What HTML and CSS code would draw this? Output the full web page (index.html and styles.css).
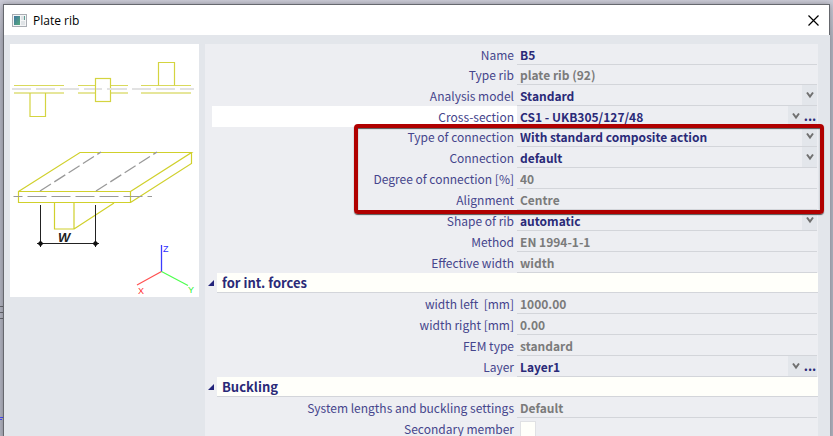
FILE: index.html
```
<!DOCTYPE html>
<html lang="en">
<head>
  <meta charset="UTF-8">
  <meta name="viewport" content="width=device-width, initial-scale=1.0">
  <title>Plate rib</title>
  <link rel="stylesheet" href="styles.css">
</head>
<body>
  <!-- bits of the drawing area visible behind the dialog -->
  <svg class="backdrop" width="4" height="130" viewBox="0 0 4 130" aria-hidden="true">
    <path d="M0 .5h4M0 6.5h4M0 12.5h4" stroke="#66676e"/>
    <path d="M0 111.5h4M0 113.5h2" stroke="#4a4aff"/>
  </svg>

  <div class="dialog">
    <header class="titlebar">
      <svg class="app-icon" width="15" height="13" viewBox="0 0 15 13" aria-hidden="true">
        <defs>
          <linearGradient id="pane" x1="0" y1="0" x2="1" y2="1">
            <stop offset="0" stop-color="#3f74a0"/>
            <stop offset="1" stop-color="#57ab7c"/>
          </linearGradient>
        </defs>
        <rect x=".5" y=".5" width="14" height="12" fill="#f4f5f6" stroke="#a9adb3"/>
        <rect x="2" y="2" width="6" height="9" fill="url(#pane)"/>
        <path d="M9 2h3v4H9zM9 7h4v4H9z" fill="#dfe3e6"/>
        <path d="M12.500 2v4" stroke="#5f9d93"/>
      </svg>
      <h1>Plate rib</h1>
      <button class="close" type="button" aria-label="Close">
        <svg width="11" height="11" viewBox="0 0 11 11"><path d="M.5 .5l10 10M10.500 .5l-10 10" stroke="#000" stroke-width="1.200"/></svg>
      </button>
    </header>

    <main class="content">
      <svg class="preview" width="189" height="253" viewBox="10 44 189 253" role="img" aria-label="Plate rib scheme">
        <!-- rib positions -->
        <g fill="none" stroke="#d9d95c">
          <path d="M14 85.500h50M78 85.500h50M141 85.500h50"/>
          <path d="M14 93h50M78 93h50M141 93h50" stroke="#e6e69a" stroke-width="2"/>
        </g>
        <path d="M12 89h182" stroke="#e2e2e2" stroke-width="2" stroke-dasharray="19 5"/>
        <g fill="#fff" stroke="#d4d440" stroke-width="1.200">
          <path d="M30 93v23.500h15.500V93" fill="none"/>
          <rect x="95.500" y="78.500" width="15" height="23"/>
          <path d="M158.500 85.500v-23h16v23" fill="none"/>
        </g>
        <path d="M107 89h4M96 89h6" stroke="#e2e2e2" stroke-width="2"/>
        <!-- plate with rib -->
        <g fill="none" stroke="#d0d02c" stroke-width="1.200">
          <path d="M18.500 191.500h112v11h-112zM18.500 191.500L80 152.500h111.500l-61 39M191.500 152.500v11l-61 39"/>
          <path d="M54.500 202.500v26.500h19.500v-26.500M74 229l40-26"/>
        </g>
        <g fill="none" stroke="#999">
          <path d="M40 191l61-39M96 191l61-39" stroke-width="1.300" stroke-dasharray="13 4"/>
          <path d="M13.500 196.500H152" stroke-dasharray="19 5" stroke-dashoffset="10"/>
        </g>
        <!-- width dimension -->
        <path d="M40.500 205v42M95.500 205v42M37 243.500h62" stroke="#222"/>
        <path d="M37.500 243.500l3-3 3 3-3 3zM92.500 243.500l3-3 3 3-3 3z" fill="#111"/>
        <text class="dim" x="58" y="242">W</text>
        <!-- axes -->
        <path d="M161.500 272v-27" stroke="#3c3cff" stroke-width="1.300"/>
        <path d="M161.500 271.500L137 285" stroke="#ff5050" stroke-width="1.200"/>
        <path d="M161.500 271.500L188 285.500" stroke="#4dff4d" stroke-width="1.200"/>
        <text class="axis axis-z" x="163" y="252">Z</text>
        <text class="axis axis-x" x="138" y="294">X</text>
        <text class="axis axis-y" x="188" y="293">Y</text>
      </svg>

      <form class="props">
        <div class="row row-short">
          <label for="name">Name</label>
          <div class="value"><input id="name" type="text" value="B5"></div>
        </div>
        <div class="row">
          <label for="type-rib">Type rib</label>
          <div class="value"><input id="type-rib" type="text" value="plate rib (92)" readonly></div>
        </div>
        <div class="row">
          <label for="model">Analysis model</label>
          <div class="value"><select id="model"><option>Standard</option></select></div>
        </div>
        <div class="row row-short selected">
          <label for="section">Cross-section</label>
          <div class="value"><select id="section"><option>CS1 - UKB305/127/48</option></select><button class="more" type="button" aria-label="Edit cross-section">...</button></div>
        </div>

        <div class="highlight">
          <div class="row">
            <label for="conn-type">Type of connection</label>
            <div class="value"><select id="conn-type"><option>With standard composite action</option></select></div>
          </div>
          <div class="row">
            <label for="conn">Connection</label>
            <div class="value"><select id="conn"><option>default</option></select></div>
          </div>
          <div class="row">
            <label for="degree">Degree of connection [%]</label>
            <div class="value"><input id="degree" type="text" value="40" readonly></div>
          </div>
          <div class="row">
            <label for="align">Alignment</label>
            <div class="value"><input id="align" type="text" value="Centre" readonly></div>
          </div>
        </div>

        <div class="row">
          <label for="shape">Shape of rib</label>
          <div class="value"><select id="shape"><option>automatic</option></select></div>
        </div>
        <div class="row">
          <label for="method">Method</label>
          <div class="value"><input id="method" type="text" value="EN 1994-1-1" readonly></div>
        </div>
        <div class="row">
          <label for="eff-width">Effective width</label>
          <div class="value"><input id="eff-width" type="text" value="width" readonly></div>
        </div>

        <div class="group">
          <svg class="expander" width="6" height="6" viewBox="0 0 6 6" aria-hidden="true"><path d="M6 0v6H0z" fill="#23237a"/></svg>
          <h2>for int. forces</h2>
        </div>
        <div class="row">
          <label for="width-left">width left&nbsp; [mm]</label>
          <div class="value"><input id="width-left" type="text" value="1000.00" readonly></div>
        </div>
        <div class="row">
          <label for="width-right">width right [mm]</label>
          <div class="value"><input id="width-right" type="text" value="0.00" readonly></div>
        </div>
        <div class="row">
          <label for="fem">FEM type</label>
          <div class="value"><input id="fem" type="text" value="standard" readonly></div>
        </div>
        <div class="row">
          <label for="layer">Layer</label>
          <div class="value"><select id="layer"><option>Layer1</option></select><button class="more" type="button" aria-label="Edit layer">...</button></div>
        </div>

        <div class="group">
          <svg class="expander" width="6" height="6" viewBox="0 0 6 6" aria-hidden="true"><path d="M6 0v6H0z" fill="#23237a"/></svg>
          <h2>Buckling</h2>
        </div>
        <div class="row">
          <label for="buckling">System lengths and buckling settings</label>
          <div class="value"><input id="buckling" type="text" value="Default" readonly></div>
        </div>
        <div class="row">
          <label for="secondary">Secondary member</label>
          <div class="value"><input id="secondary" type="checkbox"></div>
        </div>
      </form>
    </main>
  </div>
</body>
</html>
```
FILE: styles.css
```
* {
  box-sizing: border-box;
}
body {
  margin: 0;
  height: 100vh;
  overflow: hidden;
  padding: 4px 3px 0;
  background: linear-gradient(#ccccd8, #b2b4c0 40px);
  font-family: "Noto Sans CJK SC", "Open Sans", sans-serif;
  font-size: 12px;
  color: #45458c;
}
.backdrop {
  position: absolute;
  left: 0;
  top: 306px;
}
.dialog {
  position: relative;
  min-height: 100%;
  background: #e3e6eb;
  border-top: 1px solid #66686e;
  border-left: 1px solid #66686e;
  box-shadow: 0 0 6px rgba(0, 0, 0, 0.3);
}
/* title bar */
.titlebar {
  display: flex;
  align-items: center;
  height: 30px;
  padding: 0 10px 0 8px;
  background: #fff;
  border-right: 1px solid #66686e;
}
.titlebar h1 {
  flex: 1;
  margin: 0 0 0 6px;
  font: 400 12px "Open Sans", sans-serif;
  color: #000;
}
.close {
  display: flex;
  padding: 0;
  border: 0;
  background: none;
}
/* body of the dialog */
.content {
  display: flex;
  align-items: flex-start;
  gap: 6px;
  padding: 9px 12px 0 6px;
}
.preview {
  flex: none;
  background: #fff;
}
.dim {
  font: italic bold 13px "Liberation Sans", sans-serif;
  fill: #222;
}
.axis {
  font: 9px "Liberation Sans", sans-serif;
}
.axis-x { fill: #ff3030; }
.axis-y { fill: #30f030; }
.axis-z { fill: #3030ff; }

/* property grid */
.props {
  flex: 1;
  background: #edeef2;
}
.row {
  display: grid;
  grid-template-columns: 305px 1fr;
  height: 21px;
  padding: 0 1px 0 7px;
}
.row-short {
  height: 20px;
}
.row label {
  padding-right: 3px;
  line-height: 21px;
  text-align: right;
  white-space: nowrap;
}
.selected label {
  background: #fff;
}
.value {
  display: flex;
  min-width: 0;
  padding-left: 3px;
  border-bottom: 1px solid #d3d5da;
}
.value input,
.value select {
  flex: 1;
  min-width: 0;
  padding: 0;
  border: 0;
  outline: 0;
  background: none;
  font: 700 12px "Noto Sans CJK SC", "Open Sans", sans-serif;
  color: #2a2a78;
}
.value input[readonly] {
  color: #7b7b7b;
}
.value select {
  appearance: none;
  background: url("data:image/svg+xml,%3Csvg xmlns='http://www.w3.org/2000/svg' width='15' height='20'%3E%3Cpath fill='%23e3e6eb' d='M0 0h15v20H0z'/%3E%3Cpath d='M5 7.500l3 4 3-4' fill='none' stroke='%23707070' stroke-width='2'/%3E%3C/svg%3E") right center no-repeat;
}
.value input[type="checkbox"] {
  appearance: none;
  flex: none;
  width: 16px;
  height: 16px;
  margin: 3px 0 0;
  background: #fffffa;
  border: 1px solid #e0e1e4;
}
.more {
  width: 14px;
  padding: 0;
  border: 0;
  background: #e3e6eb;
  font: 700 13px "Noto Sans CJK SC", sans-serif;
  line-height: 16px;
  color: #2a2a78;
}
.group {
  display: flex;
  align-items: center;
  height: 20px;
  padding-left: 3px;
}
.group h2 {
  flex: 1;
  align-self: stretch;
  margin: 0 0 0 3px;
  padding-left: 5px;
  background: #fffffa;
  border-bottom: 1px solid #d3d5da;
  font-size: 13px;
  line-height: 20px;
  color: #2a2a78;
}
/* red frame around the connection settings */
.highlight {
  position: relative;
}
.highlight::after {
  content: "";
  position: absolute;
  top: -2px;
  right: -6px;
  bottom: -4px;
  left: 149px;
  border: 4px solid #b00000;
  border-radius: 4px;
  box-shadow: 0 1px 1px #555, inset 0 1px 1px #555;
  pointer-events: none;
}
```
